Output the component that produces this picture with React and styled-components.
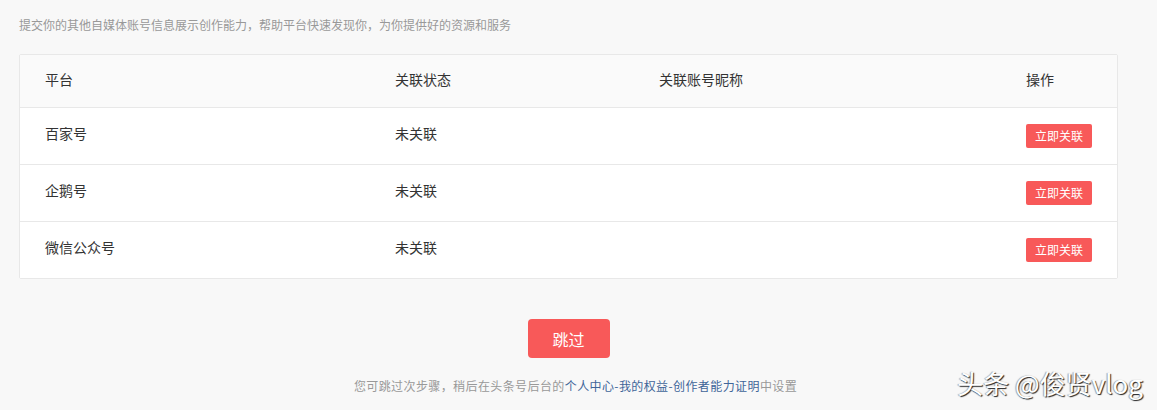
import React from "react";
import styled, { createGlobalStyle } from "styled-components";

const GlobalStyle = createGlobalStyle`
  html, body {
    margin: 0;
    padding: 0;
    background: #f8f8f8;
    font-family: "Noto Sans CJK SC", "Liberation Sans", sans-serif;
  }
`;

const platforms = [
  { name: "百家号", status: "未关联", nick: "" },
  { name: "企鹅号", status: "未关联", nick: "" },
  { name: "微信公众号", status: "未关联", nick: "" },
];

const Page = styled.div`
  position: relative;
  width: 1157px;
  height: 410px;
  box-sizing: border-box;
  padding: 16px 39px 0 19px;
  overflow: hidden;
`;

const Intro = styled.p`
  margin: 0;
  font-size: 12px;
  line-height: 18px;
  color: #999;
`;

const Table = styled.div`
  margin-top: 20px;
  background: #fff;
  border: 1px solid #e8e8e8;
  border-radius: 2px;
`;

const Row = styled.div`
  display: grid;
  grid-template-columns: 350px 264px 367px 1fr;
  align-items: center;
  box-sizing: border-box;
  padding: 0 25px ${(p) => (p.$head ? "4px" : "6px")};
  height: ${(p) => (p.$head ? "52px" : "57px")};
  background: ${(p) => (p.$head ? "#fafafa" : "#fff")};
  border-top: ${(p) => (p.$first ? "none" : "1px solid #e8e8e8")};
  font-size: 14px;
  color: #333;
`;

const Cell = styled.div`
  line-height: 20px;
  white-space: nowrap;
`;

const LinkButton = styled.button`
  width: 66px;
  height: 24px;
  padding: 0;
  margin-top: 6px;
  border: none;
  border-radius: 2px;
  background: #f85959;
  color: #fff;
  font-family: inherit;
  font-size: 12px;
  line-height: 24px;
  cursor: pointer;
`;

const Footer = styled.div`
  display: flex;
  flex-direction: column;
  align-items: center;
`;

const SkipButton = styled.button`
  margin-top: 40px;
  width: 82px;
  height: 39px;
  border: none;
  border-radius: 4px;
  background: #f85959;
  color: #fff;
  font-family: inherit;
  font-size: 16px;
  cursor: pointer;
`;

const Hint = styled.p`
  margin: 19px 0 0 14px;
  font-size: 12px;
  line-height: 18px;
  letter-spacing: 0.4px;
  color: #999;

  a {
    color: #406599;
    text-decoration: none;
  }
`;

const Watermark = styled.div`
  position: absolute;
  right: 14px;
  bottom: 12px;
  font-size: 26px;
  line-height: 30px;
  color: #fff;
  letter-spacing: 0;
  text-shadow: 1px 1px 1px #222, -1px 0 1px rgba(0, 0, 0, 0.35);
`;

export default function App() {
  return (
    <>
      <GlobalStyle />
      <Page>
        <Intro>
          提交你的其他自媒体账号信息展示创作能力，帮助平台快速发现你，为你提供好的资源和服务
        </Intro>
        <Table>
          <Row $head $first>
            <Cell>平台</Cell>
            <Cell>关联状态</Cell>
            <Cell>关联账号昵称</Cell>
            <Cell>操作</Cell>
          </Row>
          {platforms.map((p) => (
            <Row key={p.name}>
              <Cell>{p.name}</Cell>
              <Cell>{p.status}</Cell>
              <Cell>{p.nick}</Cell>
              <Cell>
                <LinkButton>立即关联</LinkButton>
              </Cell>
            </Row>
          ))}
        </Table>
        <Footer>
          <SkipButton>跳过</SkipButton>
          <Hint>
            您可跳过次步骤，稍后在头条号后台的
            <a href="#">个人中心-我的权益-创作者能力证明</a>
            中设置
          </Hint>
        </Footer>
        <Watermark>头条 @俊贤vlog</Watermark>
      </Page>
    </>
  );
}
